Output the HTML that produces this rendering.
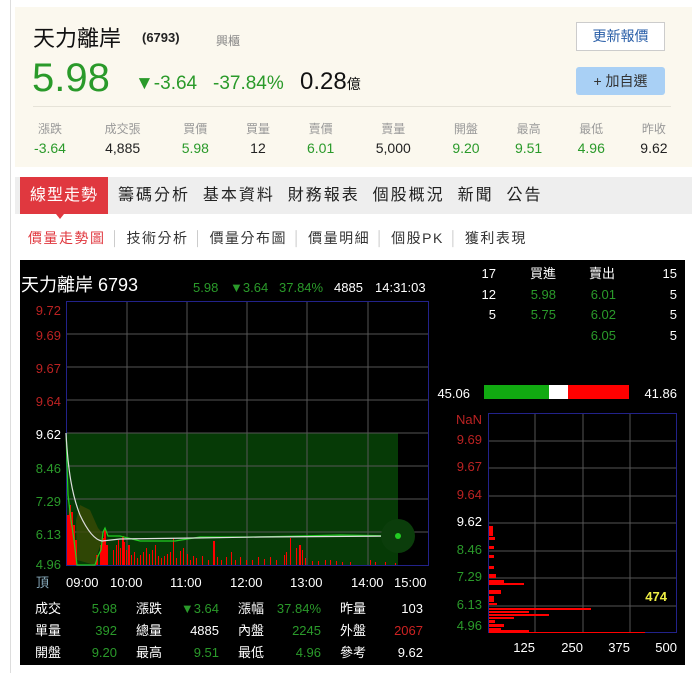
<!DOCTYPE html>
<html><head><meta charset="utf-8"><style>
*{margin:0;padding:0;box-sizing:border-box}
body{width:692px;height:673px;background:#fff;font-family:"Liberation Sans","Noto Sans CJK TC",sans-serif;position:relative;overflow:hidden}
.a{position:absolute;white-space:nowrap}
.g{color:#2a9a2a}
</style></head><body>
<div class="a" style="left:10px;top:0;width:1px;height:673px;background:#ddd"></div>
<div class="a" style="left:15px;top:7px;width:677px;height:160px;background:#fbf8ee"></div>
<div class="a" style="left:33px;top:21px;font-size:22px;color:#111">天力離岸</div>
<div class="a" style="left:142px;top:30px;font-size:13px;font-weight:bold;color:#222">(6793)</div>
<div class="a" style="left:216px;top:32px;font-size:12px;color:#888">興櫃</div>
<div class="a" style="left:576px;top:22px;width:89px;height:29px;border:1px solid #ccc;background:#fff;font-size:14px;color:#2a5fa8;text-align:center;line-height:27px">更新報價</div>
<div class="a" style="left:576px;top:67px;width:89px;height:28px;border-radius:3px;background:#a9d0f5;font-size:14px;color:#333;text-align:center;line-height:28px">+ 加自選</div>
<div class="a g" style="left:32px;top:56px;font-size:40px">5.98</div>
<div class="a g" style="left:135px;top:73px;font-size:19px">▼-3.64</div>
<div class="a g" style="left:213px;top:73px;font-size:19px">-37.84%</div>
<div class="a" style="left:300px;top:68px;font-size:24px;color:#111">0.28<span style="font-size:14px">億</span></div>
<div class="a" style="left:33px;top:106px;width:638px;height:1px;background:#e6e3d8"></div>
<div style="position:absolute;left:30px;top:120px;width:644px;font-size:12px;color:#999;display:flex;justify-content:space-between;text-align:center">
<span style="width:40px">漲跌</span><span style="width:60px">成交張</span><span style="width:40px">買價</span><span style="width:40px">買量</span><span style="width:40px">賣價</span><span style="width:60px">賣量</span><span style="width:40px">開盤</span><span style="width:40px">最高</span><span style="width:40px">最低</span><span style="width:40px">昨收</span></div>
<div style="position:absolute;left:30px;top:140px;width:644px;font-size:14px;color:#222;display:flex;justify-content:space-between;text-align:center">
<span class="g" style="width:40px">-3.64</span><span style="width:60px">4,885</span><span class="g" style="width:40px">5.98</span><span style="width:40px">12</span><span class="g" style="width:40px">6.01</span><span style="width:60px">5,000</span><span class="g" style="width:40px">9.20</span><span class="g" style="width:40px">9.51</span><span class="g" style="width:40px">4.96</span><span style="width:40px">9.62</span></div>
<div class="a" style="left:15px;top:177px;width:677px;height:37px;background:#eee"></div>
<div class="a" style="left:20px;top:177px;width:88px;height:37px;background:#e0383f;color:#fff;font-size:16px;line-height:37px;text-align:center;letter-spacing:1px">線型走勢</div>
<div class="a" style="left:56px;top:214px;width:0;height:0;border-left:4px solid transparent;border-right:4px solid transparent;border-top:5px solid #e0383f"></div>
<div class="a" style="left:118px;top:177px;font-size:16px;line-height:37px;color:#222;letter-spacing:2px">籌碼分析&nbsp;&nbsp;基本資料&nbsp;&nbsp;財務報表&nbsp;&nbsp;個股概況&nbsp;&nbsp;新聞&nbsp;&nbsp;公告</div>
<div class="a" style="left:28px;top:228px;font-size:14px;color:#333;letter-spacing:1.5px"><span style="color:#e0383f">價量走勢圖</span><span style="color:#ccc"> │ </span>技術分析<span style="color:#ccc"> │ </span>價量分布圖<span style="color:#ccc"> │ </span>價量明細<span style="color:#ccc"> │ </span>個股PK<span style="color:#ccc"> │ </span>獲利表現</div>

<svg class="a" style="left:0;top:0" width="692" height="673" font-family="Liberation Sans,Noto Sans CJK TC,sans-serif">
<rect x="20" y="260" width="665" height="405" fill="#000"/>
<text x="21" y="291" fill="#fff" font-size="18">天力離岸 6793</text>
<g font-size="13"><text x="193" y="292" fill="#2a9a2a">5.98</text><text x="230" y="292" fill="#2a9a2a">▼3.64</text><text x="279" y="292" fill="#2a9a2a">37.84%</text><text x="334" y="292" fill="#fff">4885</text><text x="375" y="292" fill="#fff">14:31:03</text></g>
<rect x="66" y="433" width="332" height="132" fill="#063a06"/>
<path d="M66 334H428M66 367H428M66 400H428M66 433H428M66 466H428M66 499H428M66 532H428M127 301V565M187 301V565M247 301V565M307 301V565M368 301V565" stroke="#555" stroke-width="1"/>
<rect x="66.5" y="301.5" width="362" height="264" fill="none" stroke="#22228a"/>
<path d="M77 560L95 565L98 552L104 535L98 528L90 510L80 505L76 520Z" fill="#3a4a05" opacity=".8"/>
<g fill="#f00">
<rect x="67" y="515" width="2" height="50"/><rect x="69" y="505" width="2" height="60"/><rect x="71" y="512" width="2" height="53"/><rect x="73" y="525" width="2" height="40"/><rect x="75" y="540" width="2" height="25"/><rect x="96" y="555" width="2" height="10"/><rect x="100" y="545" width="2" height="20"/><rect x="102" y="538" width="2" height="27"/><rect x="104" y="530" width="2" height="35"/><rect x="106" y="545" width="2" height="20"/>
<rect x="113" y="550" width="1" height="15"/><rect x="116" y="545" width="1" height="20"/><rect x="118" y="540" width="1" height="25"/><rect x="120" y="548" width="1" height="17"/><rect x="122" y="536" width="2" height="29"/><rect x="124" y="542" width="1" height="23"/><rect x="126" y="550" width="1" height="15"/><rect x="128" y="545" width="2" height="20"/><rect x="131" y="555" width="1" height="10"/><rect x="134" y="552" width="1" height="13"/><rect x="137" y="558" width="1" height="7"/><rect x="140" y="555" width="1" height="10"/><rect x="143" y="552" width="1" height="13"/><rect x="146" y="548" width="1" height="17"/><rect x="149" y="554" width="1" height="11"/><rect x="152" y="550" width="1" height="15"/><rect x="155" y="545" width="1" height="20"/><rect x="158" y="556" width="1" height="9"/><rect x="161" y="558" width="1" height="7"/><rect x="164" y="556" width="1" height="9"/><rect x="167" y="554" width="1" height="11"/><rect x="170" y="552" width="1" height="13"/><rect x="173" y="538" width="1" height="27"/><rect x="176" y="558" width="1" height="7"/><rect x="180" y="551" width="1" height="14"/><rect x="183" y="548" width="1" height="17"/><rect x="187" y="554" width="1" height="11"/><rect x="190" y="560" width="1" height="5"/><rect x="193" y="556" width="1" height="9"/><rect x="196" y="558" width="1" height="7"/><rect x="202" y="556" width="1" height="9"/><rect x="208" y="560" width="1" height="5"/><rect x="213" y="541" width="2" height="24"/><rect x="217" y="557" width="1" height="8"/><rect x="221" y="560" width="1" height="5"/><rect x="226" y="557" width="1" height="8"/><rect x="231" y="552" width="1" height="13"/><rect x="235" y="560" width="1" height="5"/><rect x="240" y="557" width="1" height="8"/><rect x="246" y="560" width="1" height="5"/><rect x="252" y="560" width="1" height="5"/><rect x="258" y="557" width="1" height="8"/><rect x="264" y="559" width="1" height="6"/><rect x="270" y="557" width="1" height="8"/><rect x="276" y="560" width="1" height="5"/><rect x="284" y="555" width="1" height="10"/><rect x="286" y="552" width="1" height="13"/><rect x="290" y="538" width="1" height="27"/><rect x="296" y="548" width="1" height="17"/><rect x="299" y="545" width="2" height="20"/><rect x="302" y="550" width="1" height="15"/><rect x="305" y="558" width="1" height="7"/><rect x="312" y="561" width="1" height="4"/><rect x="318" y="561" width="1" height="4"/><rect x="325" y="560" width="1" height="5"/><rect x="330" y="560" width="1" height="5"/><rect x="336" y="561" width="1" height="4"/><rect x="342" y="562" width="1" height="3"/><rect x="350" y="562" width="1" height="3"/><rect x="370" y="560" width="1" height="5"/><rect x="375" y="562" width="1" height="3"/><rect x="385" y="562" width="1" height="3"/><rect x="395" y="563" width="1" height="2"/>
</g>
<path d="M66 433L68 495L71 520L74 540L77 565L95 565L98 556L101 550L103 532L105 528L108 536L120 536L128 538L140 541L175 541L200 537L250 537L300 536L340 535L398 536" fill="none" stroke="#2c2" stroke-width="1.2"/>
<path d="M66 433C68 470 72 495 80 515C88 532 95 540 102 541L120 539L195 538L260 537L398 536" fill="none" stroke="#ddd" stroke-width="1.2"/>
<circle cx="398" cy="536" r="17" fill="#0b3d0b"/><circle cx="398" cy="536" r="3" fill="#2c2"/>
<g font-size="13" text-anchor="end">
<text x="61" y="315" fill="#b22">9.72</text><text x="61" y="340" fill="#b22">9.69</text><text x="61" y="373" fill="#b22">9.67</text><text x="61" y="406" fill="#b22">9.64</text><text x="61" y="439" fill="#fff">9.62</text><text x="61" y="473" fill="#2a9a2a">8.46</text><text x="61" y="506" fill="#2a9a2a">7.29</text><text x="61" y="539" fill="#2a9a2a">6.13</text><text x="61" y="569" fill="#2a9a2a">4.96</text></g>
<g font-size="13" fill="#fff"><text x="36" y="587" fill="#8ab">頂</text><text x="66" y="587">09:00</text><text x="110" y="587">10:00</text><text x="170" y="587">11:00</text><text x="230" y="587">12:00</text><text x="290" y="587">13:00</text><text x="351" y="587">14:00</text><text x="394" y="587">15:00</text></g>
<g font-size="13" fill="#fff">
<text x="35" y="613">成交</text><text x="136" y="613">漲跌</text><text x="238" y="613">漲幅</text><text x="340" y="613">昨量</text>
<text x="35" y="635">單量</text><text x="136" y="635">總量</text><text x="238" y="635">內盤</text><text x="340" y="635">外盤</text>
<text x="35" y="657">開盤</text><text x="136" y="657">最高</text><text x="238" y="657">最低</text><text x="340" y="657">參考</text></g>
<g font-size="13" text-anchor="end">
<text x="117" y="613" fill="#2a9a2a">5.98</text><text x="219" y="613" fill="#2a9a2a">▼3.64</text><text x="321" y="613" fill="#2a9a2a">37.84%</text><text x="423" y="613" fill="#fff">103</text>
<text x="117" y="635" fill="#2a9a2a">392</text><text x="219" y="635" fill="#fff">4885</text><text x="321" y="635" fill="#2a9a2a">2245</text><text x="423" y="635" fill="#c22">2067</text>
<text x="117" y="657" fill="#2a9a2a">9.20</text><text x="219" y="657" fill="#2a9a2a">9.51</text><text x="321" y="657" fill="#2a9a2a">4.96</text><text x="423" y="657" fill="#fff">9.62</text></g>
<g font-size="13" text-anchor="end">
<text x="496" y="278" fill="#fff">17</text><text x="556" y="278" fill="#fff">買進</text><text x="615" y="278" fill="#fff">賣出</text><text x="677" y="278" fill="#fff">15</text>
<text x="496" y="299" fill="#fff">12</text><text x="556" y="299" fill="#2a9a2a">5.98</text><text x="616" y="299" fill="#2a9a2a">6.01</text><text x="677" y="299" fill="#fff">5</text>
<text x="496" y="319" fill="#fff">5</text><text x="556" y="319" fill="#2a9a2a">5.75</text><text x="616" y="319" fill="#2a9a2a">6.02</text><text x="677" y="319" fill="#fff">5</text>
<text x="616" y="340" fill="#2a9a2a">6.05</text><text x="677" y="340" fill="#fff">5</text>
<text x="470" y="398" fill="#fff">45.06</text><text x="677" y="398" fill="#fff">41.86</text></g>
<rect x="484" y="385" width="65" height="14" fill="#1a1"/><rect x="549" y="385" width="19" height="14" fill="#fff"/><rect x="568" y="385" width="61" height="14" fill="#f00"/>
<path d="M488 441H677M488 468H677M488 496H677M488 523H677M488 551H677M488 578H677M488 606H677M535 413V633M583 413V633M630 413V633" stroke="#555"/>
<rect x="488.5" y="413.5" width="188" height="219" fill="none" stroke="#22228a"/>
<g fill="#f00">
<rect x="489" y="526" width="4" height="10"/><rect x="489" y="537" width="6" height="3"/><rect x="489" y="546" width="5" height="3"/><rect x="489" y="555" width="5" height="3"/><rect x="489" y="566" width="5" height="3"/><rect x="489" y="574" width="7" height="4"/><rect x="489" y="580" width="15" height="3"/><rect x="489" y="583" width="35" height="2"/><rect x="489" y="590" width="12" height="4"/><rect x="489" y="596" width="5" height="6"/><rect x="489" y="603" width="8" height="2"/><rect x="489" y="608" width="102" height="2"/><rect x="489" y="611" width="40" height="2"/><rect x="489" y="614" width="60" height="2"/><rect x="489" y="617" width="25" height="2"/><rect x="489" y="620" width="6" height="3"/><rect x="489" y="624" width="15" height="3"/><rect x="489" y="628" width="12" height="2"/><rect x="489" y="630" width="40" height="2"/><rect x="489" y="632" width="156" height="1"/></g>
<g font-size="13" text-anchor="end">
<text x="482" y="424" fill="#b22">NaN</text><text x="482" y="444" fill="#b22">9.69</text><text x="482" y="471" fill="#b22">9.67</text><text x="482" y="499" fill="#b22">9.64</text><text x="482" y="526" fill="#fff">9.62</text><text x="482" y="554" fill="#2a9a2a">8.46</text><text x="482" y="581" fill="#2a9a2a">7.29</text><text x="482" y="609" fill="#2a9a2a">6.13</text><text x="482" y="630" fill="#2a9a2a">4.96</text>
<text x="667" y="601" fill="#ee4" font-weight="bold">474</text>
<text x="535" y="652" fill="#fff">125</text><text x="583" y="652" fill="#fff">250</text><text x="630" y="652" fill="#fff">375</text><text x="677" y="652" fill="#fff">500</text></g>
</svg>
</body></html>
